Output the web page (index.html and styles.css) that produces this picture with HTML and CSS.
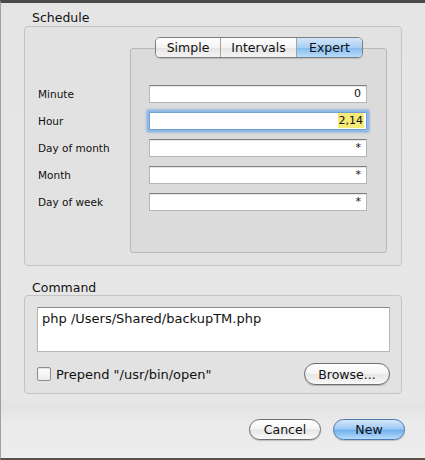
FILE: index.html
```html
<!DOCTYPE html>
<html lang="en">
<head>
    <meta charset="UTF-8">
    <meta name="viewport" content="width=device-width, initial-scale=1.0">
    <title>New Cron Job</title>
    <link rel="stylesheet" href="styles.css">
</head>
<body>
    <div class="sheet">
        <div class="group-title">Schedule</div>
        <div class="group schedule">
            <div class="labels">
                <div class="row-label">Minute</div>
                <div class="row-label">Hour</div>
                <div class="row-label">Day of month</div>
                <div class="row-label">Month</div>
                <div class="row-label">Day of week</div>
            </div>
            <div class="tab-panel">
                <div class="tabs">
                    <span class="tab simple">Simple</span>
                    <span class="tab intervals">Intervals</span>
                    <span class="tab expert selected">Expert</span>
                </div>
                <div class="fields">
                    <div class="field">0</div>
                    <div class="field focused"><span class="selection">2,14</span></div>
                    <div class="field">*</div>
                    <div class="field">*</div>
                    <div class="field">*</div>
                </div>
            </div>
        </div>

        <div class="group-title command-title">Command</div>
        <div class="group command">
            <div class="textarea">php /Users/Shared/backupTM.php</div>
            <div class="command-row">
                <label class="check"><span class="check-box"></span>Prepend "/usr/bin/open"</label>
                <button class="btn browse">Browse...</button>
            </div>
        </div>

        <div class="actions">
            <button class="btn cancel">Cancel</button>
            <button class="btn default">New</button>
        </div>
    </div>
</body>
</html>
```

FILE: styles.css
```css
body {
    margin: 0;
    font-family: "DejaVu Sans", Verdana, sans-serif;
    color: #111;
    background-color: #e9e9e9;
}
.sheet {
    width: 425px;
    height: 460px;
    padding: 0 23px;
    box-sizing: border-box;
    border-top: 3px solid #4a4a4a;
    border-bottom: 2px solid #5a5048;
    border-left: 1px solid #a0a0a0;
    background: linear-gradient(#e5e5e5 0, #e7e7e7 395px, #e3e3e3 402px, #eaeaea 420px, #ededed 100%);
}
.group-title {
    height: 15px;
    line-height: 15px;
    font-size: 12.5px;
    padding-left: 8px;
    margin: 7px 0 1px;
}
.command-title {
    margin: 14px 0 0;
}
.group {
    border: 1px solid #c4c4c4;
    border-radius: 4px;
    background-color: #e2e2e2;
}

/* schedule box */
.schedule {
    display: flex;
    height: 240px;
    box-sizing: border-box;
}
.labels {
    width: 105px;
    padding: 58px 0 0 13px;
    box-sizing: border-box;
    display: flex;
    flex-direction: column;
    gap: 9px;
}
.row-label {
    height: 18px;
    line-height: 18px;
    font-size: 10.5px;
}
.tab-panel {
    position: relative;
    flex: 1;
    margin: 21px 14px 12px 0;
    padding-top: 36px;
    border: 1px solid #b9b9b9;
    border-radius: 3px;
    background-color: #dbdbdb;
}
.tabs {
    position: absolute;
    top: -12px;
    left: 24px;
    display: flex;
    height: 21px;
    border: 1px solid #7f7f7f;
    border-radius: 5px;
    overflow: hidden;
    box-sizing: border-box;
    box-shadow: 0 1px 1px rgba(0, 0, 0, 0.15);
}
.tab {
    line-height: 19px;
    font-size: 12.5px;
    text-align: center;
    background: linear-gradient(#ffffff 0%, #f3f3f3 50%, #e4e4e4 51%, #f4f4f4 100%);
    border-right: 1px solid #a3a3a3;
}
.tab.simple { width: 64px; }
.tab.intervals { width: 75px; }
.tab.expert { width: 65px; border-right: none; }
.tab.selected {
    background: linear-gradient(#d4e7fb 0%, #a9cff5 50%, #84bbf0 51%, #b7dcfb 100%);
}
.fields {
    display: flex;
    flex-direction: column;
    gap: 9px;
    padding: 0 19px 0 18px;
}
.field {
    height: 18px;
    box-sizing: border-box;
    border: 1px solid #b6b6b6;
    border-top-color: #7f7f7f;
    background-color: #fff;
    box-shadow: inset 0 1px 0 #e6e6e6;
    text-align: right;
    font-size: 11px;
    line-height: 16px;
    padding-right: 5px;
}
.field.focused {
    border-color: #6f9fd4;
    box-shadow: 0 0 0 2px #8fb8e6, 0 0 2px 3px rgba(110, 160, 220, 0.5);
    border-radius: 1px;
    padding-right: 2px;
}
.selection {
    display: inline-block;
    line-height: 15px;
    padding: 0 1px;
    background-color: #f7ea76;
}

/* command box */
.command {
    height: 99px;
    box-sizing: border-box;
    padding: 11px 11px 0 12px;
}
.textarea {
    height: 45px;
    box-sizing: border-box;
    border: 1px solid #b6b6b6;
    border-top-color: #8a8a8a;
    background-color: #fff;
    font-size: 13px;
    line-height: 16px;
    padding: 3px 4px;
}
.command-row {
    display: flex;
    align-items: center;
    justify-content: space-between;
    margin-top: 11px;
    height: 22px;
}
.check {
    display: flex;
    align-items: center;
    gap: 5px;
    font-size: 13px;
}
.check-box {
    width: 14px;
    height: 14px;
    box-sizing: border-box;
    border: 1px solid #8d8d8d;
    border-radius: 2px;
    background: linear-gradient(#ffffff, #ebebeb);
    box-shadow: inset 0 1px 1px rgba(0, 0, 0, 0.12);
}

/* aqua push buttons */
.btn {
    height: 21px;
    padding: 0;
    border: 1px solid #6e6e6e;
    border-radius: 11px;
    font-family: "DejaVu Sans", Verdana, sans-serif;
    font-size: 12.5px;
    color: #111;
    background: linear-gradient(#ffffff 0%, #f5f5f5 45%, #e6e6e6 55%, #fafafa 100%);
    box-shadow: 0 1px 1px rgba(0, 0, 0, 0.2);
}
.browse {
    width: 86px;
    height: 22px;
}
.actions {
    display: flex;
    justify-content: flex-end;
    gap: 12px;
    margin: 25px -3px 0 0;
}
.cancel, .default {
    width: 72px;
}
.default {
    border-color: #4a78b0;
    background: linear-gradient(#d6e8fb 0%, #9fcaf3 45%, #72b0ee 55%, #b8ddfc 100%);
}
```
